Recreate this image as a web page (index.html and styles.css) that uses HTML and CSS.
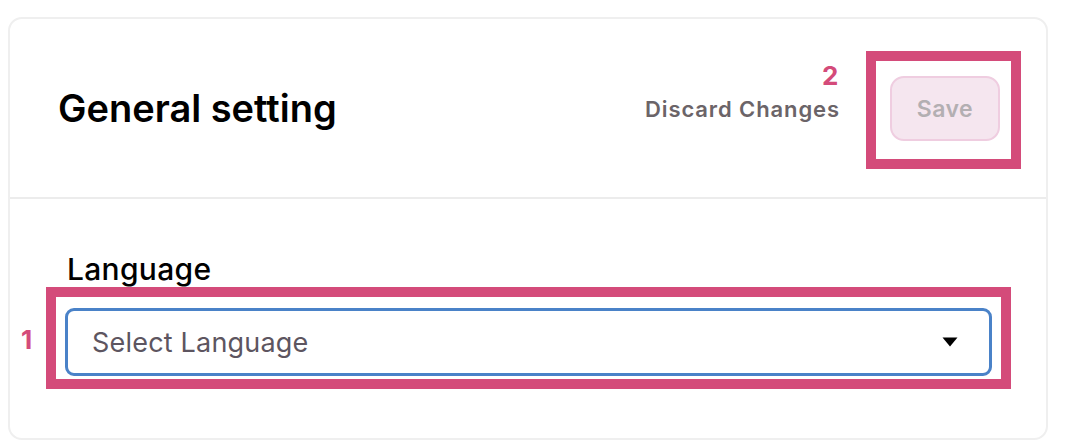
FILE: index.html
```html
<!DOCTYPE html>
<html>
<head>
<meta charset="utf-8">
<link rel="stylesheet" href="styles.css">
</head>
<body>
<div class="card">
  <div class="header">
    <h1 class="title">General setting</h1>
    <div class="actions">
      <span class="discard">Discard Changes</span>
      <div class="mark mark-save">
        <span class="mark-num num-2">2</span>
        <button class="save" type="button">Save</button>
      </div>
    </div>
  </div>
  <div class="body">
    <label class="field-label">Language</label>
    <div class="mark mark-select">
      <span class="mark-num num-1">1</span>
      <div class="select">
        <span class="placeholder">Select Language</span>
        <svg class="caret" width="16" height="10" viewBox="0 0 16 10"><path d="M0.5 0.5 H15.5 L8 9.5 Z" fill="#000"/></svg>
      </div>
    </div>
  </div>
</div>
</body>
</html>
```

FILE: styles.css
```css
* { box-sizing: border-box; }
html, body { margin: 0; padding: 0; background: #fff; }
body {
  font-family: Inter, "Noto Sans", "Liberation Sans", sans-serif;
  padding: 17px 22px 0 8px;
}
.card {
  width: 1040px;
  height: 423px;
  border: 2px solid #efefef;
  border-radius: 14px;
  background: #fff;
}
.header {
  height: 180px;
  border-bottom: 2px solid #ececec;
  display: flex;
  align-items: center;
  justify-content: space-between;
  padding: 0 25px 0 48px;
}
.title {
  margin: 0;
  font-size: 38px;
  font-weight: 600;
  color: #000;
}
.actions {
  display: flex;
  align-items: center;
  gap: 26px;
  padding-top: 4px;
}
.discard {
  font-size: 22px;
  font-weight: 600;
  letter-spacing: 0.9px;
  color: #6b6468;
  margin-top: -2px;
}
.mark {
  position: relative;
  border: 10px solid #d44b7a;
}
.mark-save {
  padding: 15px 11px 18px 14px;
}
.mark-num {
  position: absolute;
  color: #d44b7a;
  font-weight: 700;
  font-size: 26px;
  line-height: 1;
}
.num-2 { left: -54px; top: 2px; }
.num-1 { left: -35px; top: 30px; }
.save {
  width: 110px;
  height: 65px;
  border: 2px solid #efcde0;
  background: #f5e6ef;
  border-radius: 14px;
  font-family: inherit;
  font-size: 23px;
  font-weight: 600;
  letter-spacing: 0.5px;
  color: #b3afb2;
  padding: 0;
}
.body {
  padding: 55px 35px 0 36px;
}
.field-label {
  display: block;
  margin-left: 21px;
  font-size: 30px;
  font-weight: 500;
  letter-spacing: 0.3px;
  color: #000;
  line-height: 30px;
}
.mark-select {
  margin-top: 3px;
  padding: 11px 9px 3px 9px;
}
.select {
  height: 68px;
  border: 3px solid #4a82c8;
  border-radius: 9px;
  display: flex;
  align-items: center;
  justify-content: space-between;
  padding: 0 31px 0 24px;
}
.placeholder {
  font-size: 27px;
  letter-spacing: 0.2px;
  color: #5d5560;
}
.caret { display: block; }
```
